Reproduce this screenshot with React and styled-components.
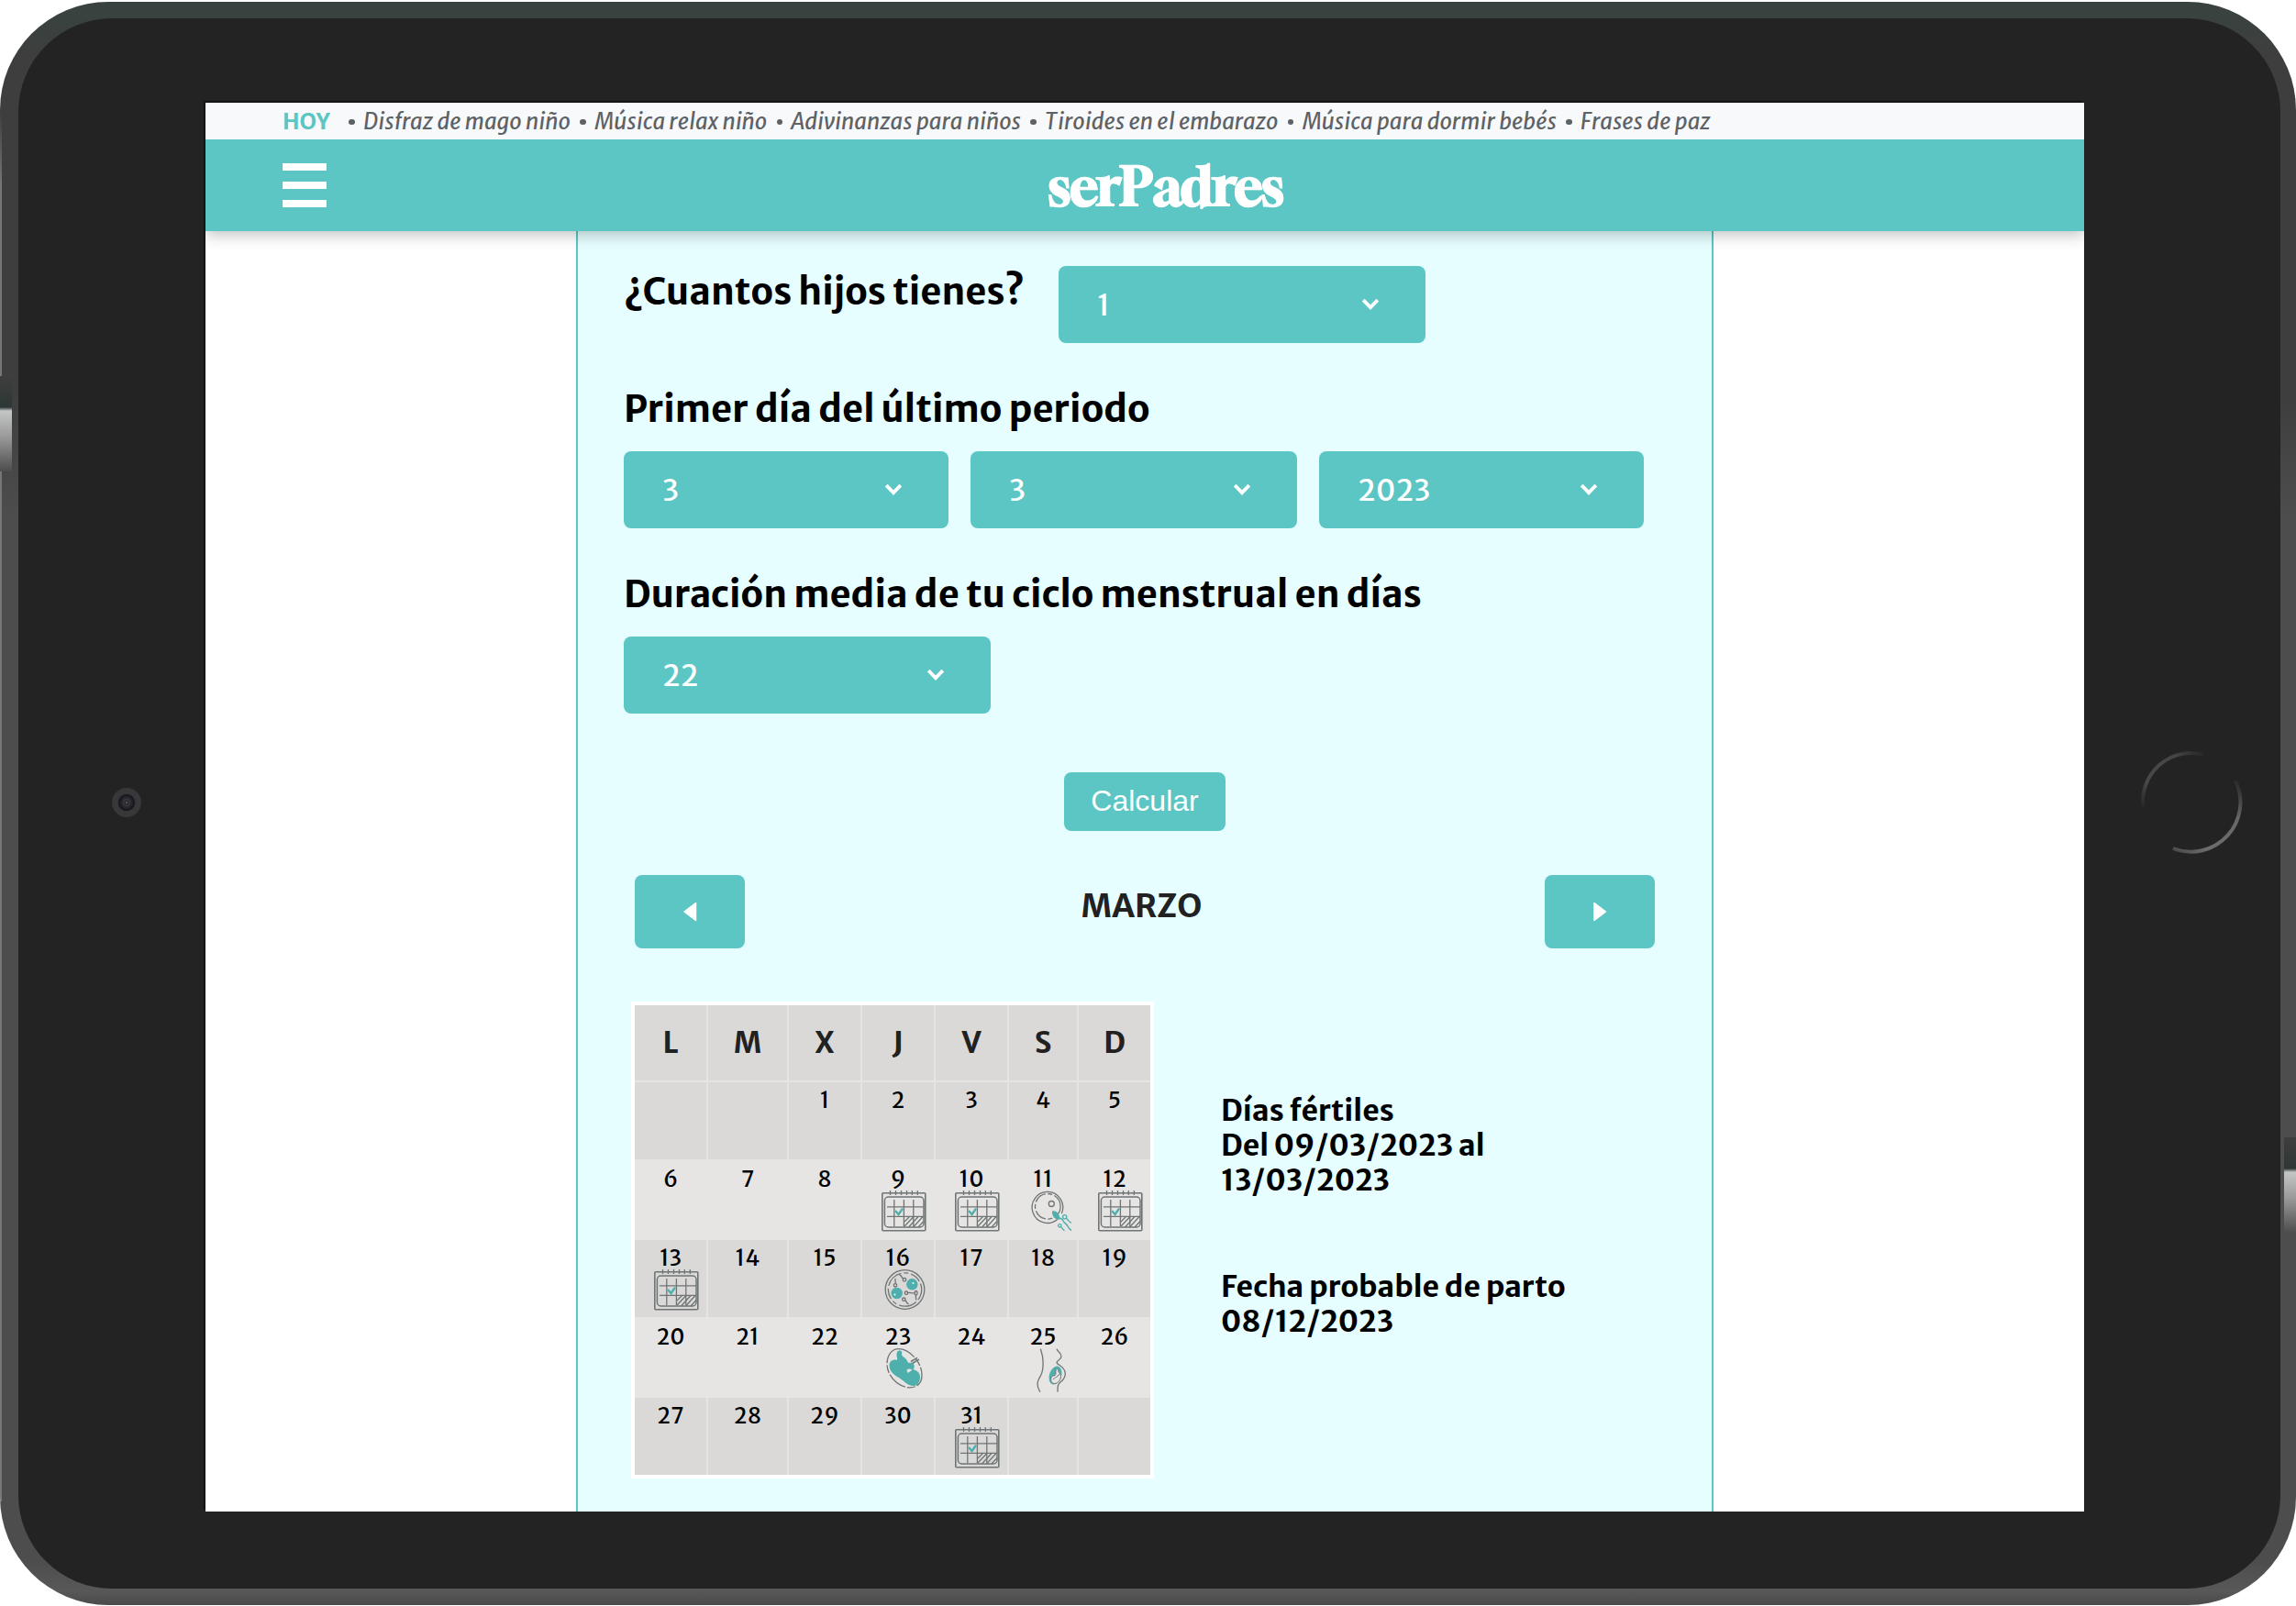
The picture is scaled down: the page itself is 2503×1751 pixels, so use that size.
import React from 'react';
import styled, { createGlobalStyle, css } from 'styled-components';

const teal = '#5cc6c4';
const ink = '#5d6266';
const mint = '#4fafac';
const sans = '"Merriweather Sans", "Open Sans", sans-serif';

const GlobalStyle = createGlobalStyle`
  *, *::before, *::after { box-sizing: border-box; }
  body { margin: 0; background: #fff; font-family: ${sans}; color: #000; }
  button { border: 0; margin: 0; padding: 0; }
`;

/* ---------- tablet ---------- */

const Tablet = styled.div`
  position: relative;
  width: 2503px;
  height: 1748px;
  margin-top: 2px;
  padding: 18px 17px 18px 20px;
  border-radius: 118px;
  overflow: hidden;
  background:
    linear-gradient(transparent, #777 80px, #777) no-repeat 0 120px / 2px 1515px,
    linear-gradient(#39423f 0, #39423f 18px, #3e3e3e 60px, #3e3e3e 430px, #4d4d4d 560px, #4d4d4d 1700px, #585858 1732px, #4b4b4b 1748px);
`;

const Bezel = styled.div`
  display: grid;
  grid-template-columns: 204px 2048px 214px;
  height: 1712px;
  padding-top: 92px;
  border-radius: 102px;
  background: #232323;
`;

const SideBezel = styled.div`
  display: flex;
  align-items: center;
  height: 1526px;
  padding-left: ${(p) => p.$inset}px;
`;

const Glare = styled.div`
  position: absolute;
  width: 13px;
  height: 104px;
  background: linear-gradient(#3e3e3e, #2e3735 34px, #c4c6c6 38px, #9a9a9a 66px, #4d4d4d 104px);
  ${(p) => (p.$side === 'left'
    ? css`left: 0; top: 408px;`
    : css`right: 0; top: 1238px;`)}
`;

const Screen = styled.div`
  height: 1536px;
  box-shadow: -2px -2px 0 #141414;
  background: #fff;
`;

/* ---------- header ---------- */

const Ticker = styled.nav`
  display: flex;
  height: 40px;
  padding-left: 84px;
  background: #f8f9fb;
  font-size: 24px;
  line-height: 41px;
  white-space: nowrap;
`;

const Today = styled.strong`
  width: 62px;
  color: ${teal};
`;

const Topic = styled.a`
  display: flex;
  align-items: center;
  color: ${ink};
  font-style: italic;
  font-weight: 400;
  &::before {
    content: '';
    width: 6.5px;
    height: 6.5px;
    margin: 2px 9.2px 0 10.3px;
    border-radius: 50%;
    background: ${ink};
  }
`;

const Header = styled.header`
  position: relative;
  display: grid;
  grid-template-columns: 1fr auto 1fr;
  align-items: center;
  height: 100px;
  padding: 0 38px 0 84px;
  background: ${teal};
  clip-path: inset(0 0 -30px 0);
  box-shadow: 0 4px 16px rgba(0, 0, 0, 0.25);
`;

const MenuButton = styled.div`
  display: flex;
  flex-direction: column;
  gap: 12px;
  width: 48px;
`;

const MenuBar = styled.span`
  height: 8px;
  background: #fff;
`;

const Logo = styled.div`
  color: #fff;
  font-family: Gloock, "DM Serif Display", "DejaVu Serif", serif;
  font-size: 58px;
  font-weight: 900;
  line-height: 100px;
  letter-spacing: -0.3px;
  -webkit-text-stroke: 0.8px #fff;
`;

/* ---------- form ---------- */

const Panel = styled.main`
  width: 1240px;
  height: 1396px;
  margin-left: 404px;
  padding: 38px 50px 0;
  border: solid ${teal};
  border-width: 0 2px;
  background: #e6feff;
`;

const InlineField = styled.div`
  display: flex;
  align-items: flex-start;
  margin-bottom: 47px;
`;

const Field = styled.div`
  margin-bottom: ${(p) => p.$after}px;
`;

const Label = styled.h2`
  margin: 0 0 21px;
  font-size: 40px;
  font-weight: 700;
  line-height: 50px;
  white-space: nowrap;
  ${(p) => p.$inline && css`width: 474px; margin: 3px 0 0;`}
`;

const DateRow = styled.div`
  display: grid;
  grid-template-columns: 354px 356px 354px;
  gap: 24px;
`;

const SelectBox = styled.div`
  display: flex;
  align-items: center;
  justify-content: space-between;
  width: ${(p) => p.$width || '100%'};
  height: 84px;
  padding: 0 50px 0 42px;
  border-radius: 8px;
  background: ${teal};
  color: #fff;
  font-size: 32px;
  font-weight: 400;
`;

const SelectValue = styled.span`
  padding-top: 2px;
`;

const Select = ({ value, width }) => (
  <SelectBox $width={width}>
    <SelectValue>{value}</SelectValue>
    <svg width="20" height="14" viewBox="0 0 20 14" fill="none" stroke="#fff" strokeWidth="3.8">
      <path d="M2.2 2.2l7.8 8 7.8-8" />
    </svg>
  </SelectBox>
);

const SubmitButton = styled.button`
  display: block;
  width: 176px;
  height: 64px;
  margin: 0 auto 48px;
  padding-bottom: 2px;
  border-radius: 8px;
  background: ${teal};
  color: #fff;
  font: 32px "Liberation Sans", Arial, sans-serif;
`;

const MonthNav = styled.div`
  display: flex;
  align-items: flex-start;
  justify-content: space-between;
  margin-bottom: 58px;
  padding: 0 12px;
`;

const ArrowButton = styled.button`
  display: grid;
  place-items: center;
  width: 120px;
  height: 80px;
  border-radius: 8px;
  background: ${teal};
`;

const Month = styled.h3`
  margin: 11px 7px 0 0;
  color: #212121;
  font-size: 35.2px;
  font-weight: 700;
  line-height: 46px;
`;

const Arrow = ({ flip }) => (
  <svg width="16" height="22" viewBox="0 0 16 22" fill="#fff" stroke="#fff" strokeWidth="1.5" strokeLinejoin="round">
    <path d={flip ? 'M2 1.5v19L14.5 11z' : 'M14.5 1.5v19L2 11z'} />
  </svg>
);

/* ---------- calendar ---------- */

const Results = styled.section`
  display: flex;
  gap: 73px;
  padding-left: 8px;
`;

const Calendar = styled.div`
  display: grid;
  grid-template-columns: 78px 86px 78px 78px 78px 74px 78px;
  grid-template-rows: 82px repeat(5, 84px);
  gap: 2px;
  height: 520px;
  border: 4px solid #fff;
  background: #e6e5e3;
`;

const Weekday = styled.div`
  background: #dad9d7;
  color: #212121;
  font-size: 32px;
  font-weight: 700;
  line-height: 82px;
  text-align: center;
`;

const Day = styled.div`
  display: flex;
  flex-direction: column;
  align-items: center;
  padding-top: 8px;
  background: ${(p) => (p.$light ? '#e6e5e3' : '#dad9d7')};
  font-size: 24px;
  line-height: 23px;
`;

const DayIcon = styled.svg`
  flex: none;
  width: 50px;
  height: 50px;
  margin: 1px 0 0 14px;
  fill: none;
  stroke: #6f7475;
  stroke-width: 1.3;
  overflow: visible;
`;

const FertileIcon = () => (
  <DayIcon viewBox="0 0 50 50">
    <rect x="0.8" y="2.8" width="47" height="41" rx="1" strokeWidth="1.6" />
    <rect x="3.4" y="7" width="42.6" height="33" rx="4" strokeWidth="1.5" />
    <path d="M9.5 0v5M15.5 0v5M21.5 0v5M27.5 0v5M33.3 0v5M39.3 0v5" />
    <path d="M6 17.8h40M6 28.4h40M13.8 10v29M24.4 10v29M34.8 10v29" />
    <path d="M25 34l5.5-5.5M25 39l10-10.5M29.5 40L40 28.5M34.5 40L45 28.5M40 40l6-6.5" />
    <path d="M15 22l3.6 4L23 19.6" stroke={mint} strokeWidth="2.4" />
  </DayIcon>
);

const OvulationIcon = () => (
  <DayIcon viewBox="0 0 50 50">
    <path d="M34 31.2A16.8 17 0 1 1 38.4 25" />
    <circle cx="23.3" cy="17.3" r="13.8" strokeDasharray="14 2.5 5 2.5" />
    <circle cx="27.3" cy="14.5" r="3" />
    <path d="M28 22.5c4-.8 8 2 8.5 9-5 .5-9-3-8.5-9z" fill={mint} stroke="none" />
    <path d="M35.5 30c5 0 4 4.5 7 6s2 5 6.5 7.5" stroke={mint} strokeWidth="1.5" />
    <circle cx="41.7" cy="28.7" r="2.1" stroke={mint} />
    <circle cx="36.3" cy="38.3" r="1.7" stroke={mint} />
    <path d="M43.2 30.3c2 .5 1.5 3 5.8 5M37.5 39.6c1.5.4 1 2.5 4 4" stroke={mint} />
  </DayIcon>
);

const ImplantationIcon = () => (
  <DayIcon viewBox="0 0 50 50">
    <circle cx="25.5" cy="22" r="21.3" />
    <circle cx="25.5" cy="22" r="18.2" strokeDasharray="12 3 20 3 5 3" />
    <g fill={mint} stroke="none">
      <circle cx="33.3" cy="16.3" r="6.2" />
      <circle cx="16.7" cy="26" r="6.2" />
    </g>
    <g fill="#fff" stroke="none">
      <circle cx="34.5" cy="15" r="1" />
      <circle cx="14.5" cy="27.5" r="1" />
    </g>
    <circle cx="25" cy="11.3" r="1.8" />
    <circle cx="15" cy="17.3" r="1.7" />
    <circle cx="27" cy="25.7" r="1.7" />
    <ellipse cx="37.6" cy="25.7" rx="1.4" ry="2.2" />
    <circle cx="24.3" cy="32.7" r="1.7" />
    <path d="M23.8 9.8C21.5 9.5 22.5 6.5 19.5 6M15 15.5c1-2-.8-3.5.2-5.5M28.8 25.7c2.5-1 4.5.8 7 0M37.6 28c-.8 2 .6 3.5-.1 5.5M25.6 34c2 .3 1.2 3 4 4" />
  </DayIcon>
);

const EmbryoIcon = () => (
  <DayIcon viewBox="0 0 50 50">
    <path d="M18.5.6C10.5.6 5.8 8.5 6 18c.3 12.5 13 24.8 25 24.8 8.5 0 13.4-5.5 13-14.5C43.5 14.5 30 .6 18.5.6z" strokeDasharray="22 2 9 2" />
    <path d="M17 4.5c1-3 5.8-2.4 5.2.5-.8 3.5 1.5 3.8 3.8 6 2.2 2.1 2 4 4 5.2 2-.8 5-.2 5.6 2.3.5 2.3-.5 3.3-.6 5 4.5.5 7.5 4.5 7 9-.4 3-1.5 4.5-2.5 6.500-2 2.500-6 2.500-10 .7-4-2.200-7-5.500-11-8C12 28.500 8.600 24 8.500 18.500c0-4.500 4.500-7 8.500-5.500.8-2.500-1.500-5 0-8.500z" fill={mint} stroke="none" />
    <path d="M27.5 23.5c2-1.5 4.5-1 6 .3l-5 3.2z" fill="#e6e5e3" stroke="none" />
    <path d="M32 14.5l7-4.2M33.5 16.5l7.5-4.4" strokeWidth="1.5" />
  </DayIcon>
);

const BellyIcon = () => (
  <DayIcon viewBox="0 0 50 50">
    <path d="M15.3.7c1.2 4 3 8 2.8 14.5-.1 6 .2 9-2.300 14-2.800 5-6.300 9-.9 18.500" />
    <path d="M33 .7c.5 3 5.500 4.500 5 8.500-.4 3.500-4.500 3.500-5 6.500 1.200 3 9.200 4 9.300 11.800.1 8-6 8-7.800 13-.8 2.500-.2 4.500-.6 7.200" />
    <ellipse cx="31.5" cy="29.5" rx="6.6" ry="10.3" transform="rotate(18 31.5 29.5)" fill={mint} stroke="none" />
    <path d="M32 24c.3-2.500 3-2 2.800.5-.2 2 2.700 2.500 2.700 6s-3 8-6.800 8c-3 0-4.500-2.500-4-5.500.5-2.500 2.500-3.500 4.300-3.200C32.500 28 31.700 26 32 24z" fill="#e6e5e3" strokeWidth="1" />
    <path d="M29 33.500c2 .5 1.500-2 3.500-2s1.500-3 3.500-3" strokeWidth="1" />
  </DayIcon>
);

const icons = {
  9: FertileIcon,
  10: FertileIcon,
  11: OvulationIcon,
  12: FertileIcon,
  13: FertileIcon,
  16: ImplantationIcon,
  23: EmbryoIcon,
  25: BellyIcon,
  31: FertileIcon,
};

const Info = styled.div`
  padding-top: 100px;
  font-size: 32px;
  font-weight: 700;
  line-height: 38px;
`;

const InfoText = styled.p`
  margin: 0 0 78px;
  white-space: pre;
`;

const Home = () => (
  <svg width="112" height="116" viewBox="-56 -58 112 116" fill="none" strokeWidth="4">
    <defs>
      <linearGradient id="rimA" gradientUnits="userSpaceOnUse" x1="-56" y1="6" x2="16" y2="-54">
        <stop offset="0" stopColor="#232323" />
        <stop offset="0.25" stopColor="#484848" />
        <stop offset="0.7" stopColor="#464646" />
        <stop offset="1" stopColor="#232323" />
      </linearGradient>
      <linearGradient id="rimB" gradientUnits="userSpaceOnUse" x1="-24" y1="50" x2="48" y2="-28">
        <stop offset="0" stopColor="#484848" />
        <stop offset="0.25" stopColor="#6c6c6c" />
        <stop offset="0.7" stopColor="#686868" />
        <stop offset="1" stopColor="#262626" />
      </linearGradient>
    </defs>
    <path d="M-53 6A53 54 0 0 1 14 -52" stroke="url(#rimA)" />
    <path d="M48 -24A54 54 0 0 1 -20 50" stroke="url(#rimB)" />
  </svg>
);

const Camera = () => (
  <svg width="34" height="34" viewBox="-17 -17 34 34" fill="none">
    <circle r="12.5" stroke="#38373a" strokeWidth="7" />
    <circle r="8" fill="#26252b" stroke="#1b1a20" strokeWidth="2.5" />
    <circle r="3.5" stroke="#36363c" strokeWidth="2" />
    <circle r="1.2" fill="#55555c" />
  </svg>
);

const topics = [
  'Disfraz de mago niño',
  'Música relax niño',
  'Adivinanzas para niños',
  'Tiroides en el embarazo',
  'Música para dormir bebés',
  'Frases de paz',
];

const days = Array.from({ length: 35 }, (_, i) => (i >= 2 && i < 33 ? i - 1 : null));

export default function App() {
  return (
    <>
      <GlobalStyle />
      <Tablet>
        <Bezel>
          <SideBezel $inset={101}><Camera /></SideBezel>
          <Screen>
            <Ticker>
              <Today>HOY</Today>
              {topics.map((t) => <Topic key={t}>{t}</Topic>)}
            </Ticker>
            <Header>
              <MenuButton><MenuBar /><MenuBar /><MenuBar /></MenuButton>
              <Logo>serPadres</Logo>
            </Header>
            <Panel>
              <InlineField>
                <Label $inline>¿Cuantos hijos tienes?</Label>
                <Select value="1" width="400px" />
              </InlineField>
              <Field $after={47}>
                <Label>Primer día del último periodo</Label>
                <DateRow>
                  <Select value="3" />
                  <Select value="3" />
                  <Select value="2023" />
                </DateRow>
              </Field>
              <Field $after={64}>
                <Label>Duración media de tu ciclo menstrual en días</Label>
                <Select value="22" width="400px" />
              </Field>
              <SubmitButton>Calcular</SubmitButton>
              <MonthNav>
                <ArrowButton><Arrow /></ArrowButton>
                <Month>MARZO</Month>
                <ArrowButton><Arrow flip /></ArrowButton>
              </MonthNav>
              <Results>
                <Calendar>
                  {['L', 'M', 'X', 'J', 'V', 'S', 'D'].map((d) => <Weekday key={d}>{d}</Weekday>)}
                  {days.map((d, i) => {
                    const Icon = icons[d];
                    return (
                      <Day key={i} $light={Math.floor(i / 7) % 2 === 1}>
                        {d}
                        {Icon && <Icon />}
                      </Day>
                    );
                  })}
                </Calendar>
                <Info>
                  <InfoText>{'Días fértiles\nDel 09/03/2023 al\n13/03/2023'}</InfoText>
                  <InfoText>{'Fecha probable de parto\n08/12/2023'}</InfoText>
                </Info>
              </Results>
            </Panel>
          </Screen>
          <SideBezel $inset={61}><Home /></SideBezel>
        </Bezel>
        <Glare $side="left" />
        <Glare $side="right" />
      </Tablet>
    </>
  );
}
